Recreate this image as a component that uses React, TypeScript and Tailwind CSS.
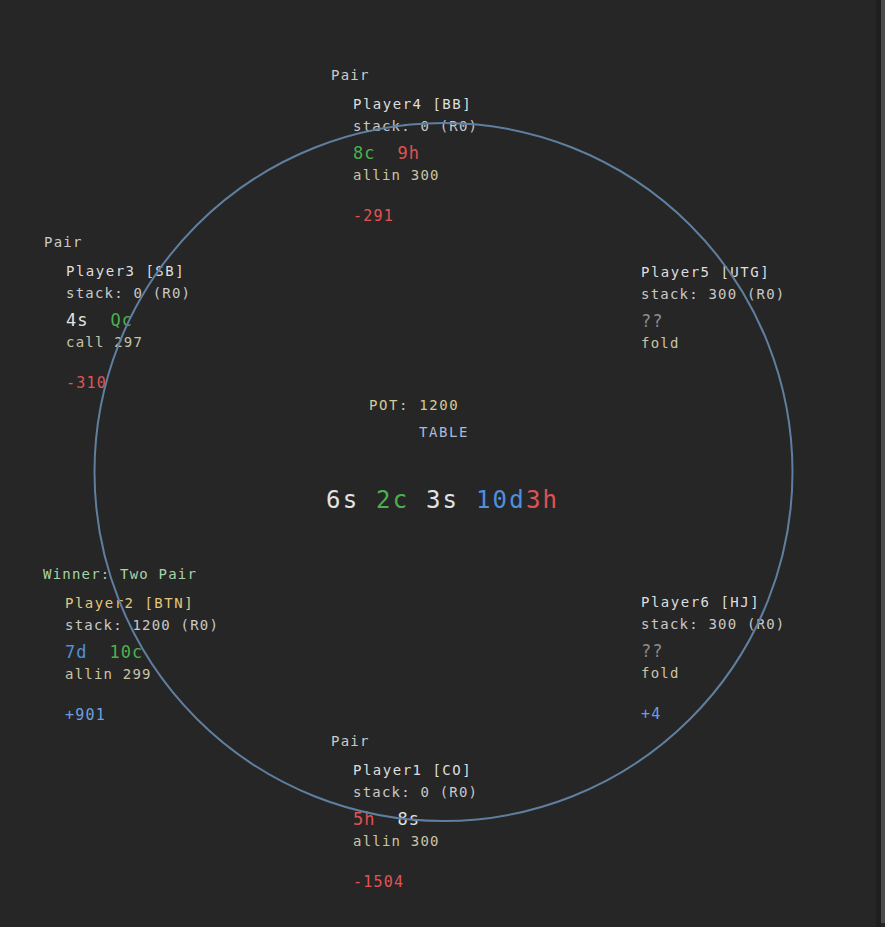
import React from 'react';

type Card = { rank: string; suit: 's' | 'h' | 'd' | 'c' };

type Seat = {
  label?: string;
  winner?: boolean;
  name: string;
  stack: string;
  cards?: Card[];
  action: string;
  result?: string;
  left: string;
  top: string;
};

const suitColor: Record<Card['suit'], string> = {
  s: 'text-[#e2e2e2]',
  h: 'text-[#e05252]',
  d: 'text-[#4f8fdc]',
  c: 'text-[#4cb050]',
};

const seats: Seat[] = [
  {
    label: 'Pair',
    name: 'Player4 [BB]',
    stack: 'stack: 0 (R0)',
    cards: [
      { rank: '8', suit: 'c' },
      { rank: '9', suit: 'h' },
    ],
    action: 'allin 300',
    result: '-291',
    left: 'left-[331px]',
    top: 'top-[64px]',
  },
  {
    label: 'Pair',
    name: 'Player3 [SB]',
    stack: 'stack: 0 (R0)',
    cards: [
      { rank: '4', suit: 's' },
      { rank: 'Q', suit: 'c' },
    ],
    action: 'call 297',
    result: '-310',
    left: 'left-[44px]',
    top: 'top-[231px]',
  },
  {
    name: 'Player5 [UTG]',
    stack: 'stack: 300 (R0)',
    action: 'fold',
    left: 'left-[619px]',
    top: 'top-[232px]',
  },
  {
    label: 'Winner: Two Pair',
    winner: true,
    name: 'Player2 [BTN]',
    stack: 'stack: 1200 (R0)',
    cards: [
      { rank: '7', suit: 'd' },
      { rank: '10', suit: 'c' },
    ],
    action: 'allin 299',
    result: '+901',
    left: 'left-[43px]',
    top: 'top-[563px]',
  },
  {
    name: 'Player6 [HJ]',
    stack: 'stack: 300 (R0)',
    action: 'fold',
    result: '+4',
    left: 'left-[619px]',
    top: 'top-[562px]',
  },
  {
    label: 'Pair',
    name: 'Player1 [CO]',
    stack: 'stack: 0 (R0)',
    cards: [
      { rank: '5', suit: 'h' },
      { rank: '8', suit: 's' },
    ],
    action: 'allin 300',
    result: '-1504',
    left: 'left-[331px]',
    top: 'top-[730px]',
  },
];

const board: Card[] = [
  { rank: '6', suit: 's' },
  { rank: '2', suit: 'c' },
  { rank: '3', suit: 's' },
  { rank: '10', suit: 'd' },
  { rank: '3', suit: 'h' },
];

const mono = "font-['DejaVu_Sans_Mono','Liberation_Mono',monospace]";

const SeatBlock = ({ seat }: { seat: Seat }) => {
  const positive = seat.result?.startsWith('+');
  return (
    <div className={`absolute ${seat.left} ${seat.top} text-[14px] tracking-[1.2px] whitespace-pre`}>
      <div
        className={`h-[22px] leading-[22px] ${seat.winner ? 'text-[#a6d4a6]' : 'text-[#cacaca]'}`}
      >
        {seat.label ?? ''}
      </div>
      <div className="pl-[22px]">
        <div
          className={`mt-[6.5px] h-[22px] leading-[22px] tracking-[1.5px] ${
            seat.winner ? 'text-[#e3c77c]' : 'text-[#dedede]'
          }`}
        >
          {seat.name}
        </div>
        <div className="h-[22px] leading-[22px] text-[#c9c9c9]">{seat.stack}</div>
        <div className="mt-[5.5px] h-[22px] leading-[22px] text-[17px] tracking-[1px] flex gap-[22px]">
          {seat.cards ? (
            seat.cards.map((c, i) => (
              <span key={i} className={suitColor[c.suit]}>
                {c.rank}
                {c.suit}
              </span>
            ))
          ) : (
            <span className="text-[#8c8c8c]">??</span>
          )}
        </div>
        <div className="h-[22px] leading-[22px] text-[#c9c5a6]">{seat.action}</div>
        {seat.result && (
          <div
            className={`mt-[19px] h-[22px] leading-[22px] text-[15px] ${
              positive ? 'text-[#6c9fe0]' : 'text-[#e05454]'
            }`}
          >
            {seat.result}
          </div>
        )}
      </div>
    </div>
  );
};

export default function App() {
  return (
    <div className={`flex w-[885px] h-[927px] bg-[#262626] ${mono}`}>
      <div className="relative w-[876px] h-full overflow-hidden">
        {seats.map((s) => (
          <SeatBlock key={s.name} seat={s} />
        ))}

        <div className="absolute left-[369px] top-[394px] h-[22px] leading-[22px] text-[14px] tracking-[1.6px] text-[#d6cb95] whitespace-pre">
          POT: 1200
        </div>
        <div className="absolute left-[419px] top-[421px] h-[22px] leading-[22px] text-[14px] tracking-[1.6px] text-[#abb9d8]">
          TABLE
        </div>
        <div className="absolute left-[326px] top-[484px] h-[32px] leading-[32px] text-[24px] tracking-[2.2px] whitespace-pre">
          {board.map((c, i) => (
            <span key={i} className={suitColor[c.suit]}>
              {c.rank}
              {c.suit}
              {i < 3 ? ' ' : ''}
            </span>
          ))}
        </div>

        <svg
          className="absolute left-0 top-0 pointer-events-none"
          width="876"
          height="927"
          viewBox="0 0 876 927"
        >
          <circle cx="443.5" cy="472" r="349" fill="none" stroke="#5f7fa0" strokeWidth="2" />
        </svg>
      </div>
      <div className="w-[5px] h-full bg-[#1f1f1f]" />
      <div className="w-[4px] h-[923px] bg-[#4b4b4b]" />
    </div>
  );
}
